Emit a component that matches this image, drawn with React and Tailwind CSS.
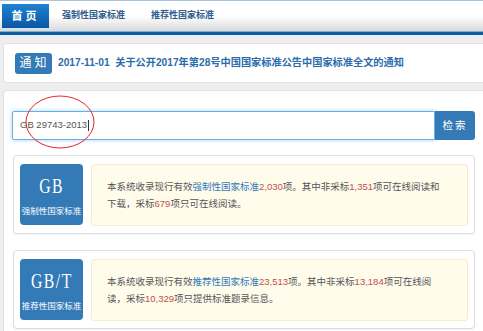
import React from "react";

const cards = [
  {
    code: "GB",
    label: "强制性国家标准",
    line1: ["本系统收录现行有效", "强制性国家标准", "2,030", "项。其中非采标", "1,351", "项可在线阅读和"],
    line2: ["下载，采标", "679", "项只可在线阅读。"],
  },
  {
    code: "GB/T",
    label: "推荐性国家标准",
    line1: ["本系统收录现行有效", "推荐性国家标准", "23,513", "项。其中非采标", "13,184", "项可在线阅"],
    line2: ["读，采标", "10,329", "项只提供标准题录信息。"],
  },
];

// alternate plain / link / number pieces
function Line({ parts }) {
  return (
    <div className="whitespace-nowrap">
      {parts.map((p, i) => {
        if (/^[\d,]+$/.test(p)) {
          return (
            <span key={i} className="text-[#c0504d]">
              {p}
            </span>
          );
        }
        if (p.endsWith("国家标准")) {
          return (
            <span key={i} className="text-[#337ab7]">
              {p}
            </span>
          );
        }
        return <span key={i}>{p}</span>;
      })}
    </div>
  );
}

function StandardCard({ card }) {
  return (
    <div className="flex gap-[8px] rounded-[4px] border border-[#dedede] bg-white pt-[8px] pb-[7px] pl-[6px] pr-[6px] shadow-[0_1px_2px_rgba(0,0,0,0.06)]">
      <div className="flex h-[61px] w-[63px] shrink-0 flex-col items-center rounded-[4px] bg-[#337ab7] pt-[11px] text-white">
        <div className="scale-x-75 font-['Liberation_Serif',serif] text-[21px] leading-[22px] tracking-[2px]">
          {card.code}
        </div>
        <div className="mt-[9px] text-[8.5px] leading-[10px]">{card.label}</div>
      </div>
      <div className="flex h-[62px] flex-1 flex-col justify-center rounded-[3px] border border-[#f6ebcd] bg-[#fffcec] px-[15px] text-[9.5px] leading-[17px] text-[#555]">
        <Line parts={card.line1} />
        <Line parts={card.line2} />
      </div>
    </div>
  );
}

export default function App() {
  return (
    <div className="relative h-[331px] w-[483px] overflow-hidden bg-[#eeeeee] font-['Liberation_Sans','Noto_Sans_CJK_SC',sans-serif]">
      {/* top nav */}
      <div className="flex h-[31px] items-center border-t border-[#a9c6de] bg-gradient-to-b from-white via-white to-[#d9d9d9] pl-[2px]">
        <div className="flex h-[24px] w-[47px] items-center justify-center bg-gradient-to-b from-[#1f82d2] to-[#0a57a4] text-[11px] font-bold tracking-[3px] text-white">
          首页
        </div>
        <div className="ml-[13px] text-[9px] font-bold text-[#2f5d8c]">强制性国家标准</div>
        <div className="ml-[26px] text-[9px] font-bold text-[#2f5d8c]">推荐性国家标准</div>
      </div>
      <div className="h-[1px] bg-[#7eaed8]" />
      <div className="h-[3px] bg-[#0b5ca8]" />

      <div className="pl-[3px] pt-[8px]">
        {/* notice */}
        <div className="flex h-[40px] items-center rounded-l-[3px] border border-r-0 border-[#e2e2e2] bg-white pl-[11px]">
          <div className="flex h-[21px] w-[37px] items-center justify-center rounded-[3px] bg-[#337ab7] pl-[2px] text-[12px] tracking-[3px] text-white">
            通知
          </div>
          <div className="ml-[6px] whitespace-nowrap text-[10.2px] font-bold text-[#2b6cab]">
            2017-11-01&nbsp;&nbsp;关于公开2017年第28号中国国家标准公告中国家标准全文的通知
          </div>
        </div>

        {/* search + cards */}
        <div className="mt-[7px] h-[260px] rounded-tl-[4px] border-l border-t border-[#e2e2e2] bg-white px-[8px] pt-[20px]">
          <div className="flex h-[29px]">
            <div className="flex flex-1 items-center rounded-l-[2px] border border-[#66afe9] pl-[7px] text-[9.5px] text-[#555] shadow-[0_0_4px_rgba(102,175,233,0.6)]">
              GB 29743-2013
              <span className="ml-[1px] h-[11px] w-[1px] bg-[#333]" />
            </div>
            <div className="flex w-[40px] items-center justify-center rounded-r-[3px] bg-[#337ab7] text-[10.5px] tracking-[2px] text-white">
              检索
            </div>
          </div>
          <div className="mt-[15px] flex flex-col gap-[16px] pl-[1px]">
            {cards.map((c) => (
              <StandardCard key={c.code} card={c} />
            ))}
          </div>
        </div>
      </div>

      {/* red annotation circle */}
      <svg className="absolute left-[25px] top-[95px]" width="70" height="54" viewBox="0 0 70 54">
        <ellipse cx="35" cy="27" rx="34" ry="26" fill="none" stroke="#e3262a" strokeWidth="1" />
      </svg>
    </div>
  );
}
